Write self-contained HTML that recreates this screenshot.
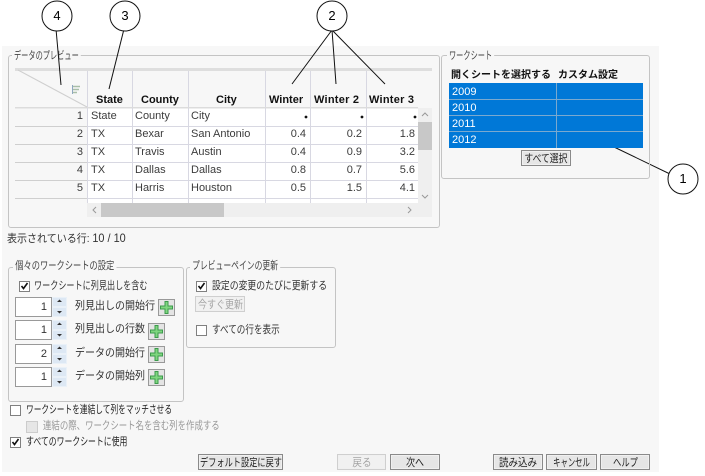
<!DOCTYPE html>
<html><head><meta charset="utf-8">
<style>
html,body{margin:0;padding:0;width:705px;height:476px;overflow:hidden;background:#fff}
body{position:relative;font-family:"Liberation Sans","Noto Sans CJK JP",sans-serif;font-size:10px;color:#222}
.a{position:absolute;white-space:nowrap}
.t{position:absolute;white-space:nowrap;font-size:11px;line-height:13px;color:#333;transform-origin:0 0}
.box{position:absolute;border:1px solid #c4c4c4;border-radius:3px;box-sizing:border-box}
.leg{position:absolute;background:#f7f7f7;padding:0 3px;font-size:11px;line-height:12px;white-space:nowrap;color:#444;transform-origin:0 0}
.hd{position:absolute;font-weight:bold;font-size:11px;line-height:13px;white-space:nowrap;color:#111}
.c{position:absolute;font-size:11px;line-height:13px;white-space:nowrap;color:#3c3c3c}
.r{text-align:right}
.btn{position:absolute;box-sizing:border-box;border:1px solid #8a8a8a;background:#e6e6e6;font-size:11px;white-space:nowrap;color:#222;box-shadow:inset 0 0 0 1px #f0f0f0;display:flex;align-items:center;justify-content:center;top:454px;height:16px}
.btn span{display:block;line-height:14px;flex:none;position:relative;top:1px}
.dis{color:#a5a5a5;border-color:#cfcfcf;background:#f1f1f1}
.cb{position:absolute;width:11px;height:11px;box-sizing:border-box;border:1px solid #808080;background:#fff}
.sp{position:absolute;left:15px;width:37px;height:20px;box-sizing:border-box;border:1px solid #999;background:#fff;text-align:right;padding-right:4px;font-size:11px;line-height:18px;color:#333}
.ar{position:absolute;left:52px;width:15px;height:10px;background:#dde8f4;box-sizing:border-box;border:1px solid #eaf1f8}
.pl{position:absolute;width:17px;height:17px;box-sizing:border-box;border:1px solid #999;background:#e4e4e4}
</style></head><body>
<div class="a" style="left:2px;top:46px;width:657px;height:426px;background:#f7f7f7"></div>

<div class="box" style="left:8px;top:55px;width:432px;height:173px"></div>
<div class="leg" style="left:12px;top:50px;transform:scaleX(.655)">データのプレビュー</div>

<svg class="a" style="left:0;top:0" width="705" height="476">
<rect x="15" y="68" width="417" height="3" fill="#dedede"/>
<rect x="418" y="108" width="14" height="95" fill="#efefef"/>
<rect x="87" y="108" width="331" height="95" fill="#fff"/>
<rect x="87" y="203" width="345" height="14" fill="#efefef"/>
<rect x="101" y="203" width="123" height="14" fill="#c8c8c8"/>
<rect x="418" y="122" width="14" height="28" fill="#c8c8c8"/>
<rect x="15" y="107" width="403" height="1.5" fill="#dcdcdc"/>
<path d="M18 70L87 107" fill="none" stroke="#cfcfcf"/>
<g stroke="#d8d8e2" stroke-width="1" fill="none">
<path d="M87.5 71V107M132.5 71V107M188.5 71V107M265.5 71V107M310.5 71V107M366.5 71V107"/>
<path d="M87.5 108V203M132.5 108V203M188.5 108V203M265.5 108V203M310.5 108V203M366.5 108V203"/>
<path d="M87 126.5H418M87 144.5H418M87 162.5H418M87 180.5H418M87 198.5H418"/>
</g>
<path d="M15 126.5H87M15 144.5H87M15 162.5H87M15 180.5H87M15 198.5H87" stroke="#cfcfcf"/>
<path d="M72.5 85V94" stroke="#8fa7c0"/><path d="M73 86.5H80M73 89.5H79M73 92.5H77" stroke="#a9bfa9" stroke-width="1.5"/>
<g stroke="#999" fill="none" stroke-width="1"><path d="M96 207L93 210L96 213M408 207L411 210L408 213M422 116L425 113L428 116M422 195L425 198L428 195"/></g>
<circle cx="306" cy="117" r="1.4" fill="#111"/><circle cx="362" cy="117" r="1.4" fill="#111"/><circle cx="415" cy="117" r="1.4" fill="#111"/>
<g fill="none" stroke="#111" stroke-width="1">
<path d="M56 29L61 85M124 29L109 89M332 30L292 84M332 30L336 84M332 30L385 84M614 147L670 174"/>
<circle cx="57" cy="16" r="15" fill="#fff"/><circle cx="125" cy="16" r="15" fill="#fff"/><circle cx="332" cy="16" r="15" fill="#fff"/><circle cx="683" cy="179" r="15" fill="#fff"/>
</g>
</svg>
<div class="a" style="left:47px;width:20px;text-align:center;top:8px;font-size:13px;line-height:16px;color:#000">4</div>
<div class="a" style="left:115px;width:20px;text-align:center;top:8px;font-size:13px;line-height:16px;color:#000">3</div>
<div class="a" style="left:322px;width:20px;text-align:center;top:8px;font-size:13px;line-height:16px;color:#000">2</div>
<div class="a" style="left:673px;width:20px;text-align:center;top:171px;font-size:13px;line-height:16px;color:#000">1</div>

<div class="hd" style="left:96px;top:94px">State</div>
<div class="hd" style="left:141px;top:94px">County</div>
<div class="hd" style="left:216px;top:94px">City</div>
<div class="hd" style="left:269px;top:94px">Winter</div>
<div class="hd" style="left:314px;top:94px;letter-spacing:.25px">Winter 2</div>
<div class="hd" style="left:369px;top:94px;letter-spacing:.25px">Winter 3</div>

<div class="c r" style="left:60px;width:23px;top:110px">1</div>
<div class="c r" style="left:60px;width:23px;top:128px">2</div>
<div class="c r" style="left:60px;width:23px;top:146px">3</div>
<div class="c r" style="left:60px;width:23px;top:164px">4</div>
<div class="c r" style="left:60px;width:23px;top:182px">5</div>

<div class="c" style="left:91px;top:110px">State</div><div class="c" style="left:135px;top:110px">County</div><div class="c" style="left:191px;top:110px">City</div>
<div class="c" style="left:91px;top:128px">TX</div><div class="c" style="left:135px;top:128px">Bexar</div><div class="c" style="left:191px;top:128px">San Antonio</div>
<div class="c" style="left:91px;top:146px">TX</div><div class="c" style="left:135px;top:146px">Travis</div><div class="c" style="left:191px;top:146px">Austin</div>
<div class="c" style="left:91px;top:164px">TX</div><div class="c" style="left:135px;top:164px">Dallas</div><div class="c" style="left:191px;top:164px">Dallas</div>
<div class="c" style="left:91px;top:182px">TX</div><div class="c" style="left:135px;top:182px">Harris</div><div class="c" style="left:191px;top:182px">Houston</div>

<div class="c r" style="left:270px;width:36px;top:128px">0.4</div><div class="c r" style="left:320px;width:42px;top:128px">0.2</div><div class="c r" style="left:370px;width:45px;top:128px">1.8</div>
<div class="c r" style="left:270px;width:36px;top:146px">0.4</div><div class="c r" style="left:320px;width:42px;top:146px">0.9</div><div class="c r" style="left:370px;width:45px;top:146px">3.2</div>
<div class="c r" style="left:270px;width:36px;top:164px">0.8</div><div class="c r" style="left:320px;width:42px;top:164px">0.7</div><div class="c r" style="left:370px;width:45px;top:164px">5.6</div>
<div class="c r" style="left:270px;width:36px;top:182px">0.5</div><div class="c r" style="left:320px;width:42px;top:182px">1.5</div><div class="c r" style="left:370px;width:45px;top:182px">4.1</div>

<div class="box" style="left:441px;top:55px;width:209px;height:124px"></div>
<div class="leg" style="left:447px;top:50px;transform:scaleX(.655)">ワークシート</div>
<div class="hd" style="left:451px;top:69px;font-size:10px">開くシートを選択する</div>
<div class="hd" style="left:558px;top:69px;font-size:10px">カスタム設定</div>
<div class="a" style="left:449px;top:83px;width:194px;height:65px;background:#0078d7"></div>
<div class="a" style="left:449px;top:99px;width:194px;height:1px;background:#7aa9cf"></div>
<div class="a" style="left:449px;top:115px;width:194px;height:1px;background:#7aa9cf"></div>
<div class="a" style="left:449px;top:131px;width:194px;height:1px;background:#7aa9cf"></div>
<div class="a" style="left:556px;top:83px;width:1px;height:65px;background:#7aa9cf"></div>
<div class="c" style="left:452px;top:86px;color:#fff">2009</div>
<div class="c" style="left:452px;top:102px;color:#fff">2010</div>
<div class="c" style="left:452px;top:118px;color:#fff">2011</div>
<div class="c" style="left:452px;top:134px;color:#fff">2012</div>
<div class="btn" style="left:521px;top:150px;width:50px;height:16px"><span style="transform:scaleX(.8)">すべて選択</span></div>

<div class="t" style="left:7px;top:232px;transform:scaleX(.91)">表示されている行: <span style="font-size:12px">10 / 10</span></div>

<div class="box" style="left:8px;top:267px;width:176px;height:135px"></div>
<div class="leg" style="left:13px;top:260px;transform:scaleX(.75)">個々のワークシートの設定</div>
<div class="cb" style="left:19px;top:281px"></div>
<div class="t" style="left:34px;top:280px;transform:scaleX(.737)">ワークシートに列見出しを含む</div>

<div class="sp" style="top:297px">1</div><div class="ar" style="top:297px"></div><div class="ar" style="top:307px"></div>
<div class="sp" style="top:320px">1</div><div class="ar" style="top:320px"></div><div class="ar" style="top:330px"></div>
<div class="sp" style="top:344px">2</div><div class="ar" style="top:344px"></div><div class="ar" style="top:354px"></div>
<div class="sp" style="top:367px">1</div><div class="ar" style="top:367px"></div><div class="ar" style="top:377px"></div>
<svg class="a" style="left:52px;top:297px" width="15" height="90" fill="#333"><path d="M5 5h5l-2.500-2.500zM5 14h5l-2.500 2.500zM5 28h5l-2.500-2.500zM5 37h5l-2.500 2.500zM5 52h5l-2.500-2.500zM5 61h5l-2.500 2.500zM5 75h5l-2.500-2.500zM5 84h5l-2.500 2.500z"/></svg>
<div class="t" style="left:75px;top:300px;transform:scaleX(.91)">列見出しの開始行</div>
<div class="t" style="left:75px;top:323px;transform:scaleX(.91)">列見出しの行数</div>
<div class="t" style="left:75px;top:347px;transform:scaleX(.91)">データの開始行</div>
<div class="t" style="left:75px;top:370px;transform:scaleX(.91)">データの開始列</div>
<div class="pl" style="left:158px;top:299px"></div>
<div class="pl" style="left:148px;top:323px"></div>
<div class="pl" style="left:148px;top:346px"></div>
<div class="pl" style="left:148px;top:369px"></div>
<svg class="a" style="left:0;top:0" width="200" height="400" fill="#7fd67f" stroke="#3c9a4c" stroke-width="1"><path d="M165 301.500h3v4.500h4.500v3H168v4.500h-3V309h-4.500v-3h4.500z"/><path d="M155 325.500h3v4.500h4.500v3H158v4.500h-3V333h-4.500v-3h4.500zM155 348.500h3v4.500h4.500v3H158v4.500h-3V356h-4.500v-3h4.500zM155 371.500h3v4.500h4.500v3H158v4.500h-3V379h-4.500v-3h4.500z"/></svg>

<div class="box" style="left:186px;top:267px;width:150px;height:81px"></div>
<div class="leg" style="left:190px;top:260px;transform:scaleX(.71)">プレビューペインの更新</div>
<div class="cb" style="left:196px;top:281px"></div>
<div class="t" style="left:212px;top:280px;transform:scaleX(.805)">設定の変更のたびに更新する</div>
<div class="btn dis" style="left:195px;top:296px;width:50px;height:16px"><span style="transform:scaleX(.82)">今すぐ更新</span></div>
<div class="cb" style="left:196px;top:325px"></div>
<div class="t" style="left:212px;top:324px;transform:scaleX(.78)">すべての行を表示</div>

<div class="cb" style="left:10px;top:405px"></div>
<div class="t" style="left:26px;top:404px;color:#222;transform:scaleX(.7)">ワークシートを連結して列をマッチさせる</div>
<div class="cb" style="left:26px;top:421px;width:12px;height:12px;background:#e6e6e6;border-color:#ccc"></div>
<div class="t" style="left:43px;top:420px;color:#999;transform:scaleX(.765)">連結の際、ワークシート名を含む列を作成する</div>
<div class="cb" style="left:10px;top:437px"></div>
<div class="t" style="left:26px;top:436px;color:#222;transform:scaleX(.715)">すべてのワークシートに使用</div>
<svg class="a" style="left:0;top:0" width="220" height="450" fill="none" stroke="#111" stroke-width="1.6"><path d="M21.500 286L23.500 288.500L27.500 283M198.500 286L200.500 288.500L204.500 283M12.500 442L14.500 444.500L18.500 439"/></svg>

<div class="btn" style="left:198px;width:85px"><span style="transform:scaleX(.745)">デフォルト設定に戻す</span></div>
<div class="btn dis" style="left:337px;width:49px"><span style="transform:scaleX(.87)">戻る</span></div>
<div class="btn" style="left:390px;width:50px"><span style="transform:scaleX(.82)">次へ</span></div>
<div class="btn" style="left:493px;width:50px"><span style="transform:scaleX(.865)">読み込み</span></div>
<div class="btn" style="left:546px;width:51px"><span style="transform:scaleX(.67)">キャンセル</span></div>
<div class="btn" style="left:600px;width:50px"><span style="transform:scaleX(.755)">ヘルプ</span></div>
</body></html>
